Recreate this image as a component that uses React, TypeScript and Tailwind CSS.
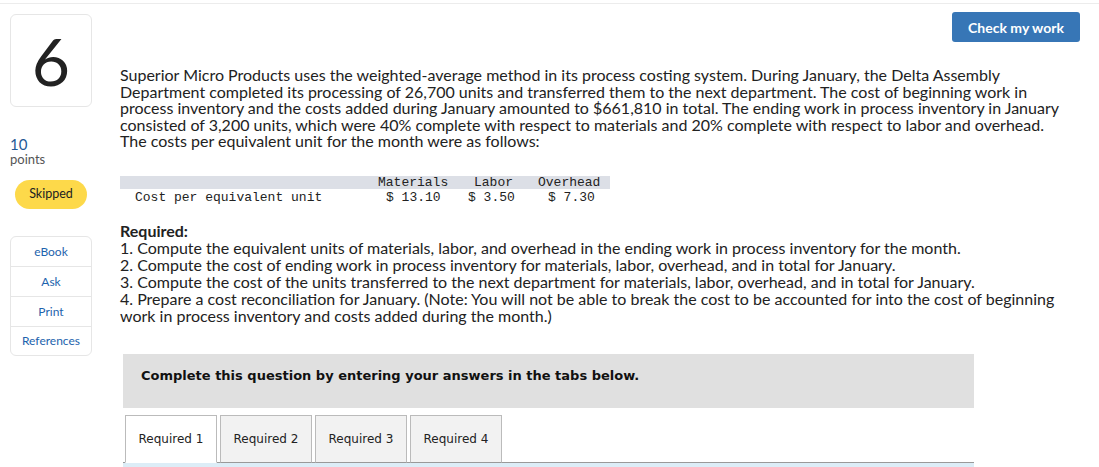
import React from 'react';

const body = { fontFamily: 'Lato, "Open Sans", sans-serif' };
const mono = { fontFamily: '"Liberation Mono", "Courier New", monospace' };
const verdana = { fontFamily: '"DejaVu Sans", Verdana, sans-serif' };

function Sidebar() {
  return (
    <div className="flex w-[82px] shrink-0 flex-col items-start">
      <div className="flex h-[93px] w-[82px] items-center justify-center rounded-md border border-[#e6e6e6] text-[66px] leading-none text-[#222]">
        6
      </div>
      <div className="mt-[29px] text-[15px] leading-[16px] text-[#1f5a96]">10</div>
      <div className="text-[13px] leading-[15px] text-[#555]">points</div>
      <div className="ml-[5px] mt-[13px] flex h-[29px] w-[72px] items-center justify-center rounded-full bg-[#fdd94a] text-[12.5px] text-[#222]">
        Skipped
      </div>
      <div className="mt-[27px] w-[82px] rounded-md border border-[#e6e6e6] text-[12px] text-[#1d63ad]">
        {['eBook', 'Ask', 'Print', 'References'].map((l, i) => (
          <div
            key={l}
            className={`flex items-center justify-center ${i < 3 ? 'h-[30px] border-b border-[#e6e6e6]' : 'h-[28px]'}`}
          >
            {l}
          </div>
        ))}
      </div>
    </div>
  );
}

function CostTable() {
  return (
    <div className="mt-[26px] w-[490px] text-[13px] text-[#222]" style={mono}>
      <div className="flex h-[13px] items-center bg-[#dcdfe6] leading-[13px]">
        <div className="w-[258px]" />
        <div className="w-[88px]">Materials</div>
        <div className="w-[70px] pl-[8px]">Labor</div>
        <div className="pl-[2px]">Overhead</div>
      </div>
      <div className="flex h-[18px] items-center leading-[18px]">
        <div className="w-[258px] pl-[15px]">Cost per equivalent unit</div>
        <div className="w-[88px] pl-[8px]">$ 13.10</div>
        <div className="w-[72px] pl-[2px]">$ 3.50</div>
        <div className="pl-[10px]">$ 7.30</div>
      </div>
    </div>
  );
}

function Tabs() {
  const tabs = ['Required 1', 'Required 2', 'Required 3', 'Required 4'];
  return (
    <div className="ml-[3px] mt-[7px] w-[851px]" style={verdana}>
      <div className="flex items-end gap-[3px] border-b border-[#999] pl-[2px]">
        {tabs.map((t, i) => (
          <div
            key={t}
            className={`-mb-px flex h-[48px] w-[92px] items-center justify-center border border-[#bbb] text-[12px] text-[#222] ${
              i === 0 ? 'border-b-white bg-white' : 'border-b-[#999] bg-[#f2f2f2]'
            }`}
          >
            {t}
          </div>
        ))}
      </div>
      <div className="h-[6px] bg-[#dcedf7]" />
    </div>
  );
}

export default function App() {
  return (
    <div className="h-[467px] w-[1099px] overflow-hidden bg-white" style={body}>
      <div className="h-[4px] border-b border-[#ececec]" />
      <div className="flex pl-[10px] pt-[10px]">
        <Sidebar />
        <div className="ml-[28px] flex-1">
          <div className="-mt-[2px] flex justify-end pr-[19px]">
            <button
              type="button"
              className="h-[30px] w-[128px] rounded-[3px] bg-[#3776b6] text-[14px] font-bold text-white"
              style={body}
            >
              Check my work
            </button>
          </div>
          <p className="mt-[25px] text-[16px] leading-[16.6px] text-[#222]">
            Superior Micro Products uses the weighted-average method in its process costing system. During January, the Delta Assembly
            <br />
            Department completed its processing of 26,700 units and transferred them to the next department. The cost of beginning work in
            <br />
            process inventory and the costs added during January amounted to $661,810 in total. The ending work in process inventory in January
            <br />
            consisted of 3,200 units, which were 40% complete with respect to materials and 20% complete with respect to labor and overhead.
            <br />
            The costs per equivalent unit for the month were as follows:
          </p>
          <CostTable />
          <div className="mt-[15px] text-[16px] leading-[17px] text-[#222]">
            <div className="font-bold">Required:</div>
            <div>1. Compute the equivalent units of materials, labor, and overhead in the ending work in process inventory for the month.</div>
            <div>2. Compute the cost of ending work in process inventory for materials, labor, overhead, and in total for January.</div>
            <div>3. Compute the cost of the units transferred to the next department for materials, labor, overhead, and in total for January.</div>
            <div>
              4. Prepare a cost reconciliation for January. (Note: You will not be able to break the cost to be accounted for into the cost of beginning
              <br />
              work in process inventory and costs added during the month.)
            </div>
          </div>
          <div
            className="ml-[3px] mt-[30px] h-[54px] w-[851px] bg-[#e0e0e0] pl-[18px] pt-[14px] text-[13px] font-bold leading-[16px] text-[#111]"
            style={verdana}
          >
            Complete this question by entering your answers in the tabs below.
          </div>
          <Tabs />
        </div>
      </div>
    </div>
  );
}
